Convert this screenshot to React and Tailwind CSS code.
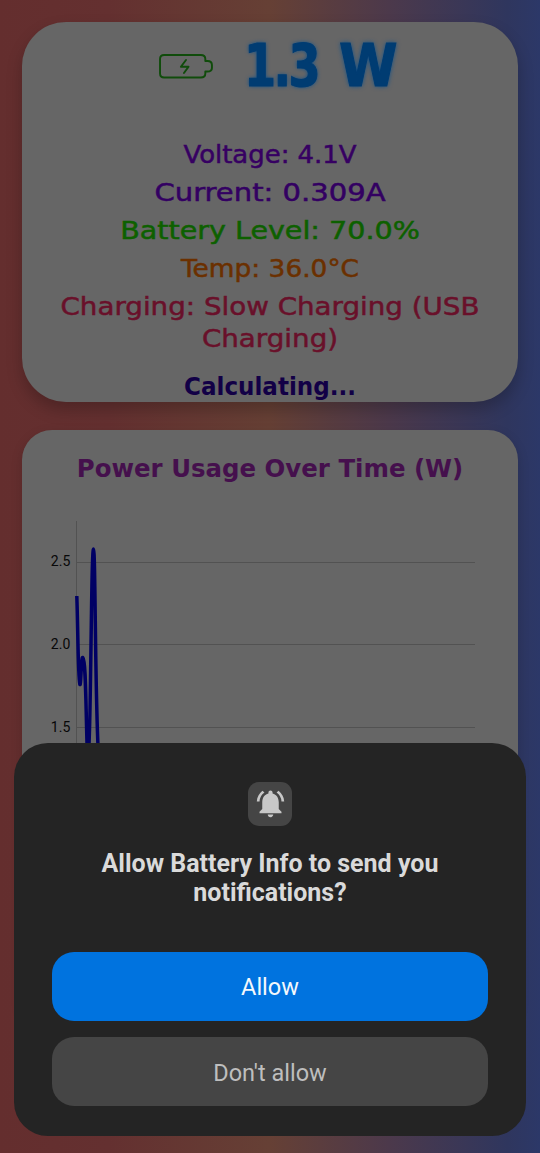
import { MdNotificationsActive } from 'react-icons/md';

const stats = [
  { text: 'Voltage: 4.1V', style: 'text-[#360062] scale-x-[1.08]' },
  { text: 'Current: 0.309A', style: 'text-[#330062] scale-x-[1.21]' },
  { text: 'Battery Level: 70.0%', style: 'text-[#0d6000] scale-x-[1.19]' },
  { text: 'Temp: 36.0°C', style: 'text-[#6b3000] scale-x-[1.10]' },
];

function BatteryIcon() {
  return (
    <svg className="h-[26px] w-[57px] shrink-0" viewBox="0 0 56 26" preserveAspectRatio="none" fill="none" stroke="#104c0b" strokeWidth="1.9" strokeLinejoin="round" strokeLinecap="round">
      <path d="M6 2H42Q46.500 2 46.500 6V8H48.500Q53 8 53 12V15Q53 18.500 48.500 18.500H46.500V20.500Q46.500 24.500 42 24.500H6Q2 24.500 2 20.500V6Q2 2 6 2Z" />
      <path d="M27.500 7 22.500 13.700H30L25.500 20" />
    </svg>
  );
}

function PowerCard() {
  return (
    <section className="h-[380px] shrink-0 rounded-[44px] bg-[#666] shadow-[0_8px_16px_rgba(0,0,0,0.22)]">
      <div className="flex h-[117px] items-start pl-[136px] pt-[10px]">
        <div className="pt-[21px]"><BatteryIcon /></div>
        <div className="ml-[29px] flex whitespace-nowrap font-['DejaVu_Sans_Condensed','DejaVu_Sans',sans-serif] text-[59px] font-bold leading-[68px] text-[#003c72] [text-shadow:0_0_5px_#004d91] [-webkit-text-stroke:1px_#003c72]">
          <span className="inline-block w-[95px] origin-left scale-x-[0.87] tracking-[-3px]">1.3{' '}</span>
          <span>W</span>
        </div>
      </div>
      <div className="text-center text-[24px] leading-[32px]">
        {stats.map((s) => (
          <p key={s.text} className={'mb-1.5 whitespace-nowrap [-webkit-text-stroke:0.5px] ' + s.style}>{s.text}</p>
        ))}
        <p className="scale-x-[1.155] whitespace-nowrap text-[#69102a] [-webkit-text-stroke:0.5px]">Charging: Slow Charging (USB<br />Charging)</p>
        <p className="mt-4 scale-x-[0.96] font-bold text-[#120046]">Calculating...</p>
      </div>
    </section>
  );
}

function UsageCard() {
  return (
    <section className="mt-7 h-[600px] shrink-0 rounded-[30px] bg-[#666] pt-[23px] shadow-[0_4px_12px_rgba(0,0,0,0.15)]">
      <h2 className="scale-x-[1.018] whitespace-nowrap text-center text-[24px] font-bold leading-[32px] text-[#45104d]">Power Usage Over Time (W)</h2>
      <svg className="block h-[300px] w-[496px]" viewBox="22 485 496 300">
        <g stroke="#525252" strokeWidth="1">
          <path d="M76.500 521V784M76 562.500H475M76 644.500H475M76 727.500H475" />
        </g>
        <g fill="#080808" fontSize="14" textAnchor="end" className="font-['Roboto',sans-serif]">
          <text x="70.300" y="566">2.5</text>
          <text x="70.300" y="649">2.0</text>
          <text x="70.300" y="731.500">1.5</text>
        </g>
        <path d="M76.800 596C78 630 78 676 79.800 684C81 689 81 657 82.700 657.500C86 661 85.500 700 87.500 760C91 760 91 549 93.500 549C95.500 549 95 710 98.800 760" fill="none" stroke="#000064" strokeWidth="3.500" strokeLinejoin="round" strokeLinecap="butt" />
      </svg>
    </section>
  );
}

function PermissionDialog() {
  return (
    <div role="dialog" className="absolute bottom-[17px] left-[14px] flex h-[393px] w-[512px] flex-col items-center rounded-[34px] bg-[#242424] px-[38px] pt-[39px] font-['Roboto',sans-serif]">
      <div className="flex size-[44px] items-center justify-center rounded-[11px] bg-[#454545]">
        <MdNotificationsActive className="size-[33px] -translate-y-px text-[#c8c8c8]" />
      </div>
      <h1 className="mt-[23px] whitespace-nowrap text-center text-[25px] font-bold leading-[29px] text-[#dadada]">Allow Battery Info to send you<br />notifications?</h1>
      <button className="mt-[45px] h-[69px] w-full shrink-0 rounded-[22px] bg-[#0073df] pt-[3px] text-[23.5px] text-[#f4f8fc]">Allow</button>
      <button className="mt-4 h-[69px] w-full shrink-0 rounded-[22px] bg-[#454545] pt-[4px] text-[23.5px] text-[#bebebe]">Don't allow</button>
    </div>
  );
}

export default function App() {
  return (
    <main className="relative h-[1153px] w-[540px] overflow-hidden bg-[linear-gradient(90deg,#642e2e_0%,#643030_20%,#664035_50%,#4c394b_72%,#2f365e_94%,#2c3868_100%)] font-['DejaVu_Sans',sans-serif]">
      <div className="flex flex-col px-[22px] pt-[22px]">
        <PowerCard />
        <UsageCard />
      </div>
      <PermissionDialog />
    </main>
  );
}
